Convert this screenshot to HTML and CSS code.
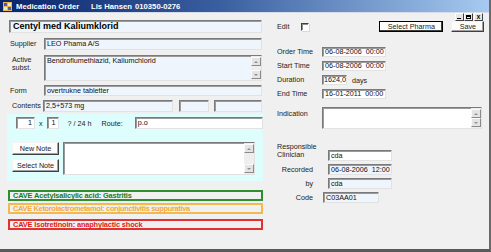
FILE: index.html
```html
<!DOCTYPE html>
<html lang="en">
<head>
  <meta charset="UTF-8" />
  <title>Medication Order</title>
  <link rel="stylesheet" href="styles.css">
</head>
<body>
  <div class="window">
    <div class="titlebar">
      <svg class="app-icon" width="9" height="9" viewBox="0 0 9 9">
        <rect x="0" y="0" width="9" height="9" fill="#f4b436"/>
        <rect x="1" y="1" width="3" height="3" fill="#3a62b8"/>
        <rect x="5" y="1" width="3" height="3" fill="#e6e6e6"/>
        <rect x="1" y="5" width="3" height="3" fill="#e6e6e6"/>
        <rect x="5" y="5" width="3" height="3" fill="#3a62b8"/>
      </svg>
      <span class="title app">Medication Order</span>
      <span class="title patient">Lis Hansen</span>
      <span class="title">010350-0276</span>
    </div>

    <div class="controls">
      <div class="ctl"><span class="ctl-min"></span></div>
      <div class="ctl"><span class="ctl-max"></span></div>
      <div class="ctl ctl-close">x</div>
    </div>

    <div class="content">
      <div class="left">
        <div class="field name">Centyl med Kaliumklorid</div>

        <div class="row r-supplier">
          <label class="lbl">Supplier</label>
          <div class="field grow">LEO Phama A/S</div>
        </div>

        <div class="row r-active">
          <label class="lbl two">Active<br>subst.</label>
          <div class="field grow scrolled">
            <span>Bendroflumethiazid, Kaliumchlorid</span>
            <div class="scrollbar">
              <div class="sb-btn"><i class="up"></i></div>
              <div class="sb-btn"><i class="down"></i></div>
            </div>
          </div>
        </div>

        <div class="row r-form">
          <label class="lbl">Form</label>
          <div class="field grow">overtrukne tabletter</div>
        </div>

        <div class="row r-contents">
          <label class="lbl contents-lbl">Contents</label>
          <div class="field contents">2,5+573 mg</div>
          <div class="field box-a"></div>
          <div class="field box-b"></div>
        </div>

        <div class="dosage">
          <div class="row r-dose">
            <div class="field white num n1">1</div>
            <span class="txt times">x</span>
            <div class="field white num n2">1</div>
            <span class="txt per">? / 24 h</span>
            <span class="txt route-lbl">Route:</span>
            <div class="field white route">p.o</div>
          </div>
          <div class="row r-notes">
            <div class="note-buttons">
              <button class="btn note-btn">New Note</button>
              <button class="btn note-btn">Select Note</button>
            </div>
            <div class="field white notes scrolled">
              <div class="scrollbar">
                <div class="sb-btn"><i class="up"></i></div>
                <div class="sb-btn"><i class="down"></i></div>
              </div>
            </div>
          </div>
        </div>

        <div class="cave cave-green">CAVE Acetylsalicylic acid: Gastritis</div>
        <div class="cave cave-orange">CAVE Ketorolactrometamol: conjunctivitis suppurativa</div>
        <div class="cave cave-red">CAVE Isotretinoin: anaphylactic shock</div>
      </div>

      <div class="right">
        <div class="row r-edit">
          <span class="txt">Edit</span>
          <span class="checkbox"></span>
          <button class="btn default pharma">Select Pharma</button>
          <button class="btn save">Save</button>
        </div>

        <div class="row r-order">
          <label class="lbl rlbl">Order Time</label>
          <div class="field white time">06-08-2006&nbsp; 00:00</div>
        </div>
        <div class="row r-time">
          <label class="lbl rlbl">Start Time</label>
          <div class="field white time">06-08-2006&nbsp; 00:00</div>
        </div>
        <div class="row r-time">
          <label class="lbl rlbl">Duration</label>
          <div class="field white duration">1624,0</div>
          <span class="txt days">days</span>
        </div>
        <div class="row r-time">
          <label class="lbl rlbl">End Time</label>
          <div class="field white time">16-01-2011&nbsp; 00:00</div>
        </div>

        <div class="row r-indication">
          <label class="lbl rlbl top">Indication</label>
          <div class="field white indication scrolled">
            <div class="scrollbar">
              <div class="sb-btn"><i class="up"></i></div>
              <div class="sb-btn"><i class="down"></i></div>
            </div>
          </div>
        </div>

        <div class="row r-clinician">
          <label class="lbl two clin-lbl">Responsible<br>Clinician</label>
          <div class="field white clin">cda</div>
        </div>
        <div class="row r-rec">
          <label class="lbl rec-lbl">Recorded</label>
          <div class="field clin">06-08-2006&nbsp; 12:00</div>
        </div>
        <div class="row r-rec">
          <label class="lbl rec-lbl">by</label>
          <div class="field clin">cda</div>
        </div>
        <div class="row r-rec">
          <label class="lbl rec-lbl">Code</label>
          <div class="field code">C03AA01</div>
        </div>
      </div>
    </div>
  </div>
</body>
</html>
```

FILE: styles.css
```css
* {
  box-sizing: border-box;
}

body {
  margin: 0;
  font-family: 'Liberation Sans', Arial, sans-serif;
  font-size: 7.2px;
  color: #111;
  background: #fff;
}

.window {
  position: relative;
  width: 491px;
  height: 252px;
  background: #f0f0f0;
  border-right: 2px solid #6a6a6a;
  border-bottom: 3px solid #5a5a5a;
  overflow: hidden;
}

.titlebar {
  height: 13px;
  display: flex;
  align-items: center;
  padding-left: 3px;
  background: linear-gradient(to right, #0a246a, #3a5fa0 45%, #a6caf0);
  border-bottom: 1px solid #d8dce8;
}

.app-icon {
  margin-right: 4px;
  flex-shrink: 0;
}

.title {
  color: #fff;
  font-weight: bold;
  font-size: 7.7px;
  white-space: nowrap;
  flex-shrink: 0;
}

.title.app {
  width: 75px;
}

.title.patient {
  width: 44px;
}

/* window control box sits over the top right corner */
.controls {
  position: absolute;
  top: 13px;
  right: 6px;
  display: flex;
}

.ctl {
  width: 9px;
  height: 8px;
  background: #e6e6e6;
  border: 1px solid;
  border-color: #fff #404040 #404040 #fff;
  font-size: 7px;
  font-weight: bold;
  line-height: 5px;
  text-align: center;
  position: relative;
}

.ctl-close {
  margin-left: 1px;
}

.ctl-min {
  position: absolute;
  left: 1px;
  bottom: 1px;
  width: 4px;
  height: 1px;
  background: #000;
}

.ctl-max {
  position: absolute;
  left: 1px;
  top: 1px;
  width: 5px;
  height: 4px;
  border: 1px solid #000;
  border-top-width: 2px;
}

.content {
  display: flex;
  padding-top: 7px;
}

.left {
  width: 256px;
  margin-left: 7px;
}

.right {
  margin-left: 14px;
  width: 212px;
}

.row {
  display: flex;
  align-items: center;
}

.lbl {
  color: #222;
  line-height: 8px;
}

.txt {
  color: #222;
}

.field {
  height: 12px;
  background: #eef5fc;
  border: 1px solid;
  border-color: #7a7a7a #e2e2e2 #e2e2e2 #7a7a7a;
  box-shadow: inset 1px 1px 0 #9a9a9a;
  padding-left: 2px;
  line-height: 10px;
  white-space: nowrap;
  overflow: hidden;
}

.field.white {
  background: #fff;
}

.grow {
  flex: 1;
  margin-right: 1px;
}

.name {
  height: 13px;
  margin: 0 1px 0 2px;
  padding-left: 3px;
  font-size: 9px;
  font-weight: bold;
  line-height: 11px;
  color: #000;
}

.r-supplier {
  margin-top: 5px;
}

.r-supplier .lbl,
.r-active .lbl,
.r-form .lbl {
  width: 37px;
  padding-left: 3px;
}

.r-active {
  margin-top: 5px;
  align-items: flex-start;
}

.r-active .lbl {
  padding-left: 5px;
  padding-top: 1px;
}

.r-active .field {
  height: 26px;
}

.scrolled {
  position: relative;
}

.scrollbar {
  position: absolute;
  top: 0;
  right: 0;
  bottom: 0;
  width: 10px;
  background: #eeeeee;
  display: flex;
  flex-direction: column;
  justify-content: space-between;
  padding: 1px 0;
}

.sb-btn {
  height: 9px;
  background: #e4e4e4;
  border: 1px solid;
  border-color: #fafafa #8a8a8a #8a8a8a #fafafa;
  display: flex;
  align-items: center;
  justify-content: center;
}

.sb-btn i {
  width: 0;
  height: 0;
  border-left: 2px solid transparent;
  border-right: 2px solid transparent;
}

.sb-btn .up {
  border-bottom: 2px solid #909090;
}

.sb-btn .down {
  border-top: 2px solid #909090;
}

.r-form {
  margin-top: 4px;
}

.r-form .field {
  height: 11px;
  line-height: 9px;
}

.r-contents {
  margin-top: 4px;
}

.contents-lbl {
  width: 36px;
  padding-left: 5px;
}

.contents {
  width: 130px;
}

.box-a {
  width: 30px;
  margin-left: 6px;
}

.box-b {
  width: 48px;
  margin-left: 5px;
}

.dosage {
  margin-top: 2px;
  height: 67px;
  background: #defefe;
  padding: 3px 0 0 5px;
}

.num {
  text-align: right;
  padding-right: 2px;
}

.n1 {
  width: 19px;
  margin-left: 4px;
}

.times {
  margin-left: 4px;
}

.n2 {
  width: 12px;
  margin-left: 4px;
}

.per {
  margin-left: 9px;
}

.route-lbl {
  margin-left: 10px;
}

.route {
  width: 128px;
  margin-left: 12px;
}

.r-notes {
  margin-top: 13px;
  align-items: flex-start;
}

.note-buttons {
  display: flex;
  flex-direction: column;
  gap: 4px;
}

.btn {
  font-family: 'Liberation Sans', Arial, sans-serif;
  font-size: 7.2px;
  color: #222;
  padding: 0;
  background: #fcfcfc;
  border: 1px solid;
  border-color: #f4f4f4 #404040 #404040 #f4f4f4;
  box-shadow: inset -1px -1px 0 #a0a0a0;
  line-height: 9px;
}

.note-btn {
  width: 47px;
  height: 13px;
}

.notes {
  width: 192px;
  height: 33px;
  margin-left: 4px;
}

.cave {
  height: 11px;
  border: 2px solid;
  padding-left: 3px;
  font-size: 7.4px;
  font-weight: bold;
  line-height: 7px;
  letter-spacing: -0.15px;
  margin-left: 1px;
  white-space: nowrap;
}

.cave-green {
  margin-top: 9px;
  color: #197a19;
  border-color: #2d8f2d;
}

.cave-orange {
  margin-top: 2px;
  color: #f2a83a;
  border-color: #f4b850;
  letter-spacing: -0.3px;
}

.cave-red {
  margin-top: 5px;
  color: #e01818;
  border-color: #e43030;
}

.r-edit {
  margin-top: 1px;
  height: 11px;
}

.checkbox {
  width: 8px;
  height: 8px;
  margin-left: 12px;
  background: #fff;
  border: 1px solid;
  border-color: #404040 #fff #fff #404040;
  box-shadow: 1px 1px 0 #d8d8d8, inset 1px 1px 0 #909090;
}

.btn.pharma {
  width: 64px;
  height: 11px;
  margin-left: 70px;
}

.btn.default {
  border: 1px solid #000;
  box-shadow: inset -1px -1px 0 #404040, inset 1px 1px 0 #fff;
}

.btn.save {
  width: 33px;
  height: 11px;
  margin-left: 8px;
}

.rlbl {
  width: 45px;
}

.r-order {
  margin-top: 15px;
}

.r-time {
  margin-top: 4px;
}

.r-order .field,
.r-time .field {
  height: 10px;
  line-height: 8px;
}

.time {
  width: 64px;
}

.duration {
  width: 25px;
  padding-left: 1px;
}

.days {
  margin-left: 5px;
}

.r-indication {
  margin-top: 8px;
  align-items: flex-start;
}

.lbl.top {
  padding-top: 3px;
}

.indication {
  width: 160px;
  height: 22px;
}

.r-clinician {
  margin-top: 14px;
  align-items: flex-start;
}

.clin-lbl {
  width: 51px;
}

.clin {
  width: 64px;
  height: 11px;
  margin-top: 7px;
  line-height: 9px;
}

.r-rec {
  margin-top: 3px;
}

.r-rec .clin {
  margin-top: 0;
}

.rec-lbl {
  width: 36px;
  text-align: right;
}

.r-rec .clin {
  margin-left: 15px;
}

.code {
  width: 56px;
  height: 11px;
  line-height: 9px;
  margin-left: 10px;
}
```
